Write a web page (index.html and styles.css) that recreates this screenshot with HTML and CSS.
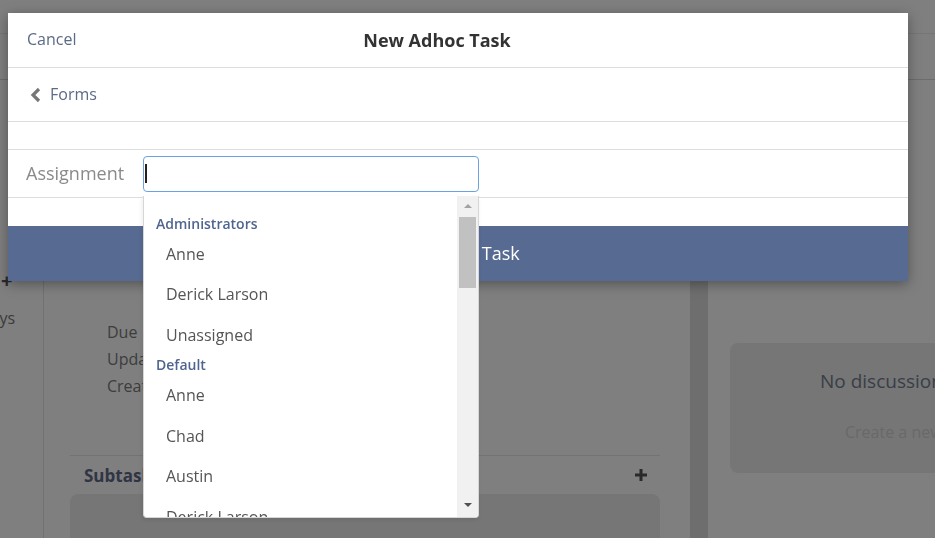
FILE: index.html
```html
<!DOCTYPE html>
<html lang="en">
<head>
    <meta charset="UTF-8">
    <meta name="viewport" content="width=device-width, initial-scale=1.0">
    <title>New Adhoc Task</title>
    <link rel="stylesheet" href="styles.css">
</head>
<body>
    <div class="app">
        <div class="topbar"></div>
        <div class="subbar"></div>
        <div class="columns">
            <aside class="sidebar">
                <div class="side-add">+</div>
                <div class="side-label">Days</div>
            </aside>
            <main class="detail">
                <div class="meta">
                    <div>Due</div>
                    <div>Updated</div>
                    <div>Created</div>
                </div>
                <div class="subtasks">
                    <div class="subtasks-head">
                        <span class="subtasks-title">Subtasks</span>
                        <span class="plus">
                            <svg width="14" height="14" viewBox="0 0 14 14"><path d="M7 1v12M1 7h12" stroke="currentColor" stroke-width="3"/></svg>
                        </span>
                    </div>
                    <div class="subtasks-card"></div>
                </div>
            </main>
            <div class="divider"></div>
            <section class="discussion">
                <div class="empty-card">
                    <div class="empty-title">No discussions yet</div>
                    <div class="empty-sub">Create a new discussion</div>
                </div>
            </section>
        </div>
    </div>

    <div class="overlay"></div>

    <div class="modal">
        <div class="modal-header">
            <a class="link cancel">Cancel</a>
            <div class="modal-title">New Adhoc Task</div>
        </div>
        <div class="row back-row">
            <svg class="chevron" width="12" height="16" viewBox="0 0 12 16"><path d="M9 2L3 8l6 6" fill="none" stroke="currentColor" stroke-width="3.2"/></svg>
            <a class="link">Forms</a>
        </div>
        <div class="row empty-row"></div>
        <div class="row field-row">
            <label class="field-label">Assignment</label>
            <div class="field">
                <div class="input"><span class="caret"></span></div>
                <div class="dropdown">
                    <div class="options">
                        <div class="group">Administrators</div>
                        <div class="option">Anne</div>
                        <div class="option">Derick Larson</div>
                        <div class="option">Unassigned</div>
                        <div class="group">Default</div>
                        <div class="option">Anne</div>
                        <div class="option">Chad</div>
                        <div class="option">Austin</div>
                        <div class="option">Derick Larson</div>
                    </div>
                    <div class="scrollbar">
                        <div class="arrow up"></div>
                        <div class="thumb"></div>
                        <div class="arrow down"></div>
                    </div>
                </div>
            </div>
        </div>
        <div class="spacer"></div>
        <div class="modal-footer">Create Adhoc Task</div>
    </div>
</body>
</html>
```

FILE: styles.css
```css
body {
    margin: 0;
    font-family: "Open Sans", "Liberation Sans", sans-serif;
    background: #fff;
    overflow: hidden;
}
.app {
    height: 538px;
    display: flex;
    flex-direction: column;
    overflow: hidden;
}
.topbar {
    flex-shrink: 0;
    height: 33px;
    border-bottom: 1px solid #ececec;
}
.subbar {
    flex-shrink: 0;
    height: 45px;
    border-bottom: 1px solid #d8d8d8;
}
.columns {
    flex: 1;
    min-height: 0;
    display: flex;
}
.sidebar {
    width: 43px;
    border-right: 1px solid #e2e2e2;
    color: #777;
    overflow: hidden;
}
.side-add {
    margin-top: 189px;
    margin-left: 1px;
    font-size: 20px;
    font-weight: bold;
    line-height: 24px;
    color: #555;
}
.side-label {
    margin-top: 14px;
    margin-left: -21px;
    font-size: 16px;
}
.detail {
    width: 590px;
    padding: 0 30px 0 26px;
}
.meta {
    margin-top: 239px;
    padding-left: 37px;
    font-size: 16px;
    line-height: 27px;
    color: #7a7a7a;
}
.subtasks {
    margin-top: 55px;
    border-top: 1px solid #e6e6e6;
}
.subtasks-head {
    height: 38px;
    display: flex;
    align-items: center;
    justify-content: space-between;
    padding: 0 12px 0 14px;
}
.subtasks-title {
    font-size: 17px;
    font-weight: bold;
    color: #5e6a88;
}
.plus {
    color: #555;
    display: flex;
}
.subtasks-card {
    height: 80px;
    background: #ececec;
    border-radius: 8px;
}
.divider {
    width: 18px;
    background: #dcdcdc;
}
.discussion {
    flex: 1;
    padding: 263px 0 0 22px;
    overflow: hidden;
}
.empty-card {
    width: 420px;
    height: 130px;
    background: #ececec;
    border-radius: 8px;
    padding-top: 25px;
    box-sizing: border-box;
    white-space: nowrap;
}
.empty-title {
    padding-left: 90px;
    font-size: 19px;
    color: #737d90;
}
.empty-sub {
    margin-top: 27px;
    padding-left: 115px;
    font-size: 16px;
    color: #d2d2d2;
}
.overlay {
    position: fixed;
    inset: 0;
    background: rgba(0, 0, 0, 0.5);
}
.modal {
    position: absolute;
    top: 13px;
    left: 8px;
    width: 900px;
    background: #fff;
    box-shadow: 0 3px 12px rgba(0, 0, 0, 0.35);
}
.modal-header {
    height: 54px;
    display: flex;
    align-items: center;
    position: relative;
    border-bottom: 1px solid #ddd;
}
.link {
    color: #5b6b86;
    font-size: 16px;
}
.cancel {
    padding-left: 19px;
    margin-top: -2px;
}
.modal-title {
    position: absolute;
    left: 0;
    right: 42px;
    text-align: center;
    font-size: 18px;
    font-weight: bold;
    color: #333;
}
.row {
    border-bottom: 1px solid #ddd;
    display: flex;
    align-items: center;
}
.back-row {
    height: 53px;
    padding-left: 22px;
    gap: 8px;
}
.chevron {
    color: #777;
}
.back-row .link {
    margin-top: -2px;
}
.empty-row {
    height: 27px;
}
.field-row {
    height: 47px;
    padding-left: 18px;
}
.field-label {
    width: 117px;
    font-size: 18px;
    color: #8a8a8a;
    margin-top: -2px;
}
.field {
    position: relative;
}
.input {
    width: 334px;
    height: 34px;
    border: 1px solid #6aa2e2;
    border-radius: 4px;
    display: flex;
    align-items: center;
}
.caret {
    width: 1.5px;
    height: 19px;
    margin-left: 1px;
    background: #222;
}
.dropdown {
    position: absolute;
    top: 40px;
    left: 0;
    width: 334px;
    height: 321px;
    background: #fff;
    border: 1px solid #d6d6d6;
    border-top: none;
    border-radius: 0 0 4px 4px;
    box-shadow: -1px 2px 4px rgba(0, 0, 0, 0.08);
    display: flex;
    overflow: hidden;
}
.options {
    flex: 1;
    padding-top: 18px;
    white-space: nowrap;
}
.group {
    height: 20px;
    line-height: 20px;
    padding-left: 12px;
    font-size: 14px;
    font-weight: 600;
    color: #4f6590;
}
.option {
    height: 40.5px;
    line-height: 40.5px;
    padding-left: 22px;
    font-size: 16px;
    color: #555;
}
.scrollbar {
    width: 21px;
    background: #f1f1f1;
    display: flex;
    flex-direction: column;
    align-items: center;
}
.arrow {
    width: 0;
    height: 0;
    border-left: 4px solid transparent;
    border-right: 4px solid transparent;
}
.arrow.up {
    margin-top: 8px;
    border-bottom: 4px solid #a3a3a3;
}
.arrow.down {
    margin-top: auto;
    margin-bottom: 10px;
    border-top: 4px solid #505050;
}
.thumb {
    width: 17px;
    height: 71px;
    margin-top: 9px;
    background: #c1c1c1;
}
.spacer {
    height: 28px;
}
.modal-footer {
    height: 55px;
    line-height: 55px;
    background: #566a92;
    color: #fff;
    font-size: 18px;
    text-align: center;
    padding-right: 32px;
}
```
